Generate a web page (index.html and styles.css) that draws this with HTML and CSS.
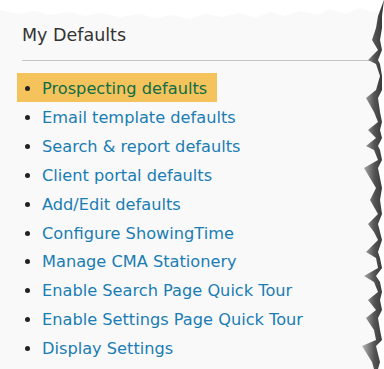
FILE: index.html
```html
<!DOCTYPE html>
<html lang="en">
<head>
    <meta charset="UTF-8">
    <title>My Defaults</title>
    <link rel="stylesheet" href="styles.css">
</head>
<body>
    <div class="sheet">
        <!-- Torn paper edges -->
        <svg class="torn-top" width="384" height="22" viewBox="0 0 384 22">
            <path d="M0 0 H384 V10 L372 12 L360 8 L345 14 L330 9 L318 15 L300 11 L285 16 L270 12 L255 18 L240 13 L222 17 L205 14 L190 19 L172 15 L155 18 L140 14 L120 17 L100 13 L85 16 L70 12 L50 15 L35 11 L18 14 L0 10 Z" fill="#ffffff"/>
        </svg>
        <svg class="torn-right" width="30" height="369" viewBox="0 0 30 369">
            <defs>
                <linearGradient id="shade" x1="0" x2="1" y1="0" y2="0">
                    <stop offset="0" stop-color="#b8b8b8"/>
                    <stop offset="0.55" stop-color="#555"/>
                    <stop offset="1" stop-color="#333"/>
                </linearGradient>
            </defs>
            <path d="M30 0 V369 H20 L18 362 L8 346 L22 340 L20 330 L12 318 L22 310 L14 300 L24 292 L20 282 L10 276 L24 268 L22 258 L12 252 L24 240 L20 232 L14 224 L24 214 L16 200 L22 188 L10 168 L24 160 L20 150 L12 146 L22 138 L14 130 L24 122 L20 112 L12 98 L22 90 L26 76 L22 64 L14 60 L24 50 L18 40 L22 28 L24 16 L30 0 Z" fill="url(#shade)"/>
            <path d="M30 0 V369 H24 L26 362 L22 346 L28 340 L26 330 L24 318 L28 310 L26 300 L28 292 L26 282 L22 276 L28 268 L26 258 L24 252 L28 240 L26 232 L24 224 L28 214 L26 200 L28 188 L24 168 L28 160 L26 150 L24 146 L28 138 L26 130 L28 122 L26 112 L24 98 L28 90 L28 76 L26 64 L24 60 L28 50 L26 40 L28 28 L28 16 L30 0 Z" fill="#ffffff"/>
        </svg>

        <h2 class="title">My Defaults</h2>
        <hr>
        <ul class="defaults">
            <li class="current"><a href="#">Prospecting defaults</a></li>
            <li><a href="#">Email template defaults</a></li>
            <li><a href="#">Search &amp; report defaults</a></li>
            <li><a href="#">Client portal defaults</a></li>
            <li><a href="#">Add/Edit defaults</a></li>
            <li><a href="#">Configure ShowingTime</a></li>
            <li><a href="#">Manage CMA Stationery</a></li>
            <li><a href="#">Enable Search Page Quick Tour</a></li>
            <li><a href="#">Enable Settings Page Quick Tour</a></li>
            <li><a href="#">Display Settings</a></li>
        </ul>
    </div>
</body>
</html>
```

FILE: styles.css
```css
body {
    margin: 0;
    background-color: #ffffff;
    font-family: "DejaVu Sans", Verdana, sans-serif;
}

.sheet {
    position: relative;
    width: 384px;
    height: 369px;
    background-color: #f9f9f9;
    padding: 25px 0 0 22px;
    box-sizing: border-box;
    overflow: hidden;
}

.torn-top {
    position: absolute;
    top: 0;
    left: 0;
}

.torn-right {
    position: absolute;
    top: 0;
    right: 0;
}

/* Heading */
.title {
    margin: 0;
    font-size: 17.5px;
    font-weight: normal;
    color: #333333;
    line-height: 21px;
}

hr {
    border: none;
    border-top: 1px solid #c4c4c4;
    margin: 14px 12px 0 0;
}

/* Link list */
.defaults {
    list-style: none;
    margin: 12px 0 0 -5px;
    padding: 0;
}
.defaults li {
    display: flex;
    align-items: center;
    width: 200px;
    height: 29px;
    padding: 2px 0 0 8px;
    box-sizing: border-box;
    font-size: 16.2px;
    white-space: nowrap;
}
.defaults li:nth-child(n+5) {
    height: 28.8px;
}
.defaults li::before {
    content: "";
    width: 5px;
    height: 5px;
    border-radius: 50%;
    background-color: #222222;
    margin-right: 12px;
    flex-shrink: 0;
}
.defaults a {
    color: #1a7db3;
    text-decoration: none;
}
.defaults li.current {
    background-color: #f4c35c;
}
.defaults li.current a {
    color: #0f6d45;
}
```
